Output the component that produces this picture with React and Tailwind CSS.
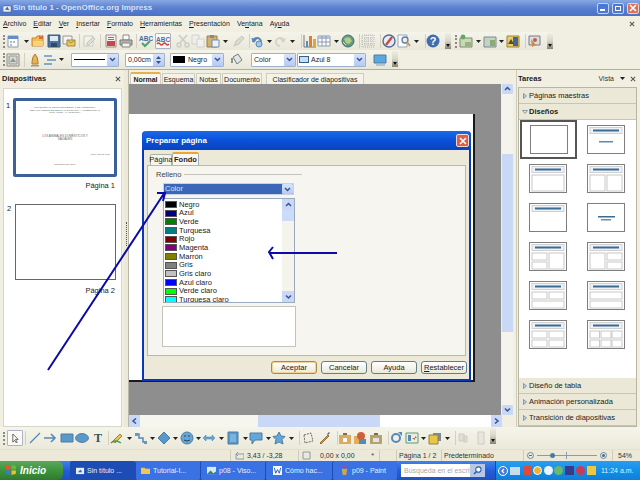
import React from "react";

const ICONS = {
  new: <><path d="M2 2h10v11H2z" fill="#fff" stroke="#7d8ea8"/><path d="M2 2h10v3H2z" fill="#4a7fc0"/><path d="M4 7h2v2H4zM7 7h2v2H7zM4 10h2v2H4z" fill="#9fb4cc"/></>,
  folder: <><path d="M1 4h4l1-2h6v10H1z" fill="#f3b33c" stroke="#b8791a"/><path d="M8 1l2 2 2-2v4H8z" fill="#d8542a"/><path d="M2 7h10v5H2z" fill="#f8cf6a"/></>,
  save: <><path d="M1 1h12v12H1z" fill="#2f5f95" stroke="#1f3f6a"/><path d="M3 2h8v5H3z" fill="#dfe8f2"/><path d="M4 9h6v4H4z" fill="#0f2f50"/></>,
  mail: <><path d="M1 2h9v8H1z" fill="#f4f4f4" stroke="#8a8a8a"/><path d="M5 6h8v6H5z" fill="#e9c44a" stroke="#9a7a20"/><path d="M5 6l4 3 4-3" fill="none" stroke="#9a7a20"/></>,
  edit: <><path d="M2 2h9v10H2z" fill="#f4f3ea" stroke="#c4c4bc"/><path d="M5 9l6-6 2 2-6 6H5z" fill="#ddd" stroke="#bbb"/></>,
  pdf: <><path d="M2 1h10v12H2z" fill="#f6f2f2" stroke="#8c7a7a"/><path d="M3 7h8v5H3z" fill="#c32b2b"/><path d="M4 3h6v1H4zM4 5h6v1H4z" fill="#b04a4a"/></>,
  print: <><path d="M4 1h6v5H4z" fill="#fff" stroke="#777"/><path d="M1 6h12v5H1z" fill="#aaa" stroke="#666"/><path d="M3 9h8v4H3z" fill="#f4f4f4" stroke="#777"/></>,
  spell: <><text x="0" y="6.5" fontSize="6.5" fontWeight="700" fill="#24589a" fontFamily="Liberation Sans">ABC</text><path d="M3 9l3 3 5-5" fill="none" stroke="#2a9a5a" strokeWidth="2"/></>,
  auto: <><text x="0" y="7.5" fontSize="6.5" fontWeight="700" fill="#24589a" fontFamily="Liberation Sans">ABC</text><path d="M1 10q1.5-2 3 0t3 0 3 0 3 0" fill="none" stroke="#d02020" strokeWidth="1.4"/></>,
  cut: <><path d="M3 1l7 8M11 1L4 9" stroke="#c8c8c2" strokeWidth="1.6"/><circle cx="3" cy="11" r="2" fill="none" stroke="#c8c8c2" strokeWidth="1.4"/><circle cx="11" cy="11" r="2" fill="none" stroke="#c8c8c2" strokeWidth="1.4"/></>,
  copy: <><path d="M1 1h7v9H1z" fill="#eee" stroke="#cfcfc8"/><path d="M6 5h7v8H6z" fill="#f2f2f2" stroke="#cfcfc8"/></>,
  paste: <><path d="M1 2h10v11H1z" fill="#c9a866" stroke="#8a6c30"/><path d="M4 1h4v3H4z" fill="#777"/><path d="M6 6h7v7H6z" fill="#eef3fa" stroke="#5a7ca8"/></>,
  brush: <><path d="M3 12l2-5 6-5 2 2-5 6z" fill="#d8d8d0" stroke="#c0c0b8"/><path d="M2 13l2-3 1 1z" fill="#c8c8c0"/></>,
  undo: <><path d="M3 8a4 4 0 1 1 4 4" fill="none" stroke="#3a76b4" strokeWidth="2"/><path d="M1 4l3 5 3-4z" fill="#3a76b4"/><circle cx="9" cy="10" r="3" fill="#9ac0e4" stroke="#3a76b4"/></>,
  redo: <><path d="M11 8a4 4 0 1 0-4 4" fill="none" stroke="#cfcfc8" strokeWidth="2"/><path d="M13 4l-3 5-3-4z" fill="#cfcfc8"/></>,
  chart: <><path d="M1 1v12h12" fill="none" stroke="#666"/><path d="M3 7h2v6H3z" fill="#3f7ac0"/><path d="M6 2h3v11H6z" fill="#d86a20"/><path d="M10 5h3v8h-3z" fill="#d8a020"/></>,
  table: <><path d="M1 2h12v10H1z" fill="#fff" stroke="#7d8ea8"/><path d="M1 2h12v3H1z" fill="#a8bcd8"/><path d="M5 2v10M9 2v10M1 8h12" stroke="#7d8ea8"/></>,
  globe: <><circle cx="7" cy="7" r="6" fill="#4d8a78" stroke="#2c5a50"/><path d="M3 5q3-3 6-1l2 3-3 3-3-1z" fill="#a6c870"/><path d="M2 8l3 3" stroke="#c8dce8"/></>,
  grid: <path d="M1 1h12v12H1zM1 4h12M1 7h12M1 10h12M4 1v12M7 1v12M10 1v12" fill="none" stroke="#aaa" strokeDasharray="1 1"/>,
  nav: <><circle cx="7" cy="7" r="6" fill="#e8ecf4" stroke="#34558a" strokeWidth="1.4"/><path d="M10 3L7 7l-3 4 3-4z" stroke="#c03030" strokeWidth="2.4"/></>,
  zoom: <><path d="M1 1h9v12H1z" fill="#fff" stroke="#8c9cb4"/><circle cx="8" cy="6" r="3" fill="#e6f0fa" stroke="#44688f" strokeWidth="1.3"/><path d="M10 8l3 4" stroke="#c09030" strokeWidth="2"/></>,
  help: <><circle cx="7" cy="7" r="6.5" fill="#2457a8"/><text x="7" y="11" textAnchor="middle" fontSize="11" fontWeight="700" fill="#fff" fontFamily="Liberation Sans">?</text></>,
  slideNew: <><path d="M1 4h12v9H1z" fill="#c4d6a8" stroke="#6a7a6a"/><circle cx="4" cy="3" r="2.4" fill="#44a048"/><path d="M6 8h6v4H6z" fill="#8aa870"/></>,
  slideDup: <><path d="M1 3h12v10H1z" fill="#b8d0c0" stroke="#6a7a8a"/><path d="M7 6h5v6H7z" fill="#7aa060"/></>,
  slideYel: <><path d="M1 2h12v11H1z" fill="#ecc850" stroke="#8a7020"/><path d="M7 3h5v9H7z" fill="#274f86"/><path d="M2 10l3-5 3 5z" fill="#333"/></>,
  show: <><path d="M2 2h11v9H2z" fill="#d8dce0" stroke="#667"/><path d="M4 5l5 6-4 2z" fill="#cc7a2a"/><circle cx="8" cy="6" r="2" fill="#b84a20"/></>,
  tbl: <><path d="M1 1h12v12H1z" fill="#e6e6de" stroke="#7a7a72"/><path d="M3 3h8v8H3z" fill="#cfd4da" stroke="#8a8a82"/><path d="M4 9l3-4 3 4z" fill="#7c8c7c"/></>,
  pin: <><path d="M7 1q3 3 3 8v2H4V9q0-5 3-8z" fill="#e8a83a" stroke="#a06a18"/><path d="M3 12h8v1.5H3z" fill="#a88a58"/></>,
  conn: <><path d="M1 3h8M4 7h9M1 11h8" stroke="#4a86b8" strokeWidth="1.6"/></>,
  fill: <><path d="M3 4l5-3 4 6-5 4z" fill="#dfe4e8" stroke="#5a6a70"/><path d="M2 5v5" stroke="#5a6a70" strokeWidth="1.6"/></>,
  screen: <><path d="M1 2h12v8H1z" fill="#3f9ce0" stroke="#3a6690"/><path d="M3 11h9v2H3z" fill="#a8bdd0"/></>,
  line: <path d="M2 12L12 2" stroke="#3a78b4" strokeWidth="1.3"/>,
  arrow: <path d="M1 7h11M8 3l4 4-4 4" fill="none" stroke="#3a78b4" strokeWidth="1.6"/>,
  rect: <path d="M1 3h12v8H1z" fill="#3f8ac6" stroke="#2f6a9a"/>,
  ellipse: <ellipse cx="7" cy="7" rx="6.4" ry="4.4" fill="#3f8ac6" stroke="#2f6a9a"/>,
  pen: <><path d="M3 10l7-7 2 2-7 7z" fill="#e8b840" stroke="#98701a"/><path d="M1 12q4-4 10 0" fill="none" stroke="#2a8a40" strokeWidth="1.3"/></>,
  curve: <><path d="M2 3h3v4h4v4h3" fill="none" stroke="#3a78b4" strokeWidth="1.5"/><path d="M1 2h3v3H1zM10 10h3v3h-3z" fill="#4a8ac0"/></>,
  diamond: <path d="M7 1l6 6-6 6-6-6z" fill="#3f8ac6" stroke="#2f6a9a"/>,
  smile: <><circle cx="7" cy="7" r="6" fill="#4f9ad6" stroke="#2f6a9a"/><path d="M4 5h2M8 5h2M4 9q3 2 6 0" stroke="#123" fill="none"/></>,
  dbl: <path d="M1 7l3-3v2h6V4l3 3-3 3V8H4v2z" fill="#4f9ad6" stroke="#2f6a9a" strokeWidth=".5"/>,
  flow: <><path d="M2 1h10v12H2z" fill="#3f8ac6" stroke="#2f6a9a"/><path d="M4 3h6v8H4z" fill="#6aa8da"/></>,
  callout: <path d="M1 2h12v7H6l-3 4V9H1z" fill="#4f9ad6" stroke="#2f6a9a"/>,
  star: <path d="M7 1l2 4 4 .5-3 3 1 4.500-4-2-4 2 1-4.500-3-3 4-.5z" fill="#4f9ad6" stroke="#2f6a9a"/>,
  points: <path d="M3 4l7-2 2 8-8 2z" fill="none" stroke="#555" strokeDasharray="2 1"/>,
  orange: <><path d="M3 12l8-8 1 1-8 8z" fill="#d88a30" stroke="#8a5a18"/><path d="M10 3l2-2 1 1-2 2z" fill="#555"/></>,
  ex: <><path d="M1 4h12v9H1z" fill="#d8a048"/><path d="M5 2h4v2H5z" fill="#735428"/><path d="M5 7h4v4H5z" fill="#fff"/></>,
  fav: <><path d="M1 5h8v8H1z" fill="#e8a040"/><circle cx="8" cy="5" r="4" fill="#c84a1a"/><path d="M6 8h7v5H6z" fill="#3a7ab0"/></>,
  brown: <><path d="M1 4h12v9H1z" fill="#ad9658"/><path d="M5 2h4v2H5z" fill="#735428"/><path d="M4 7h6v4H4z" fill="#d8e4ec"/></>,
  rotate: <><circle cx="7" cy="7" r="4" fill="none" stroke="#3a78b4" strokeWidth="2"/><path d="M9 1h4v4z" fill="#3a78b4"/></>,
  align: <><path d="M1 2h12v10H1z" fill="#e8f0e0" stroke="#4a8a5a"/><path d="M3 4h3v6H3z" fill="#3a78b4"/><path d="M7 7h5l-2-2v4z" fill="#c83a2a"/></>,
  layer: <><path d="M5 2h8v8H5z" fill="#6a7a8a"/><path d="M1 4h9v9H1z" fill="#e8c030" stroke="#8a7018"/></>,
  gray1: <path d="M3 3h5v7H3zM8 5h3v6H8z" fill="#dcdcd4" stroke="#c8c8c0"/>,
  gray2: <path d="M4 1h6v12H4z" fill="#e6e6de" stroke="#c8c8c0"/>,
};

function Ic({ n, m = "" }) {
  return <svg viewBox="0 0 14 14" className={`${m} block w-[14px] h-[14px] shrink-0 opacity-85`}>{ICONS[n]}</svg>;
}
const Arr = ({ m = "" }) => <svg viewBox="0 0 5 3" className={`${m} block w-[5px] h-[3px] shrink-0`}><path d="M0 0h5L2.5 3z" fill="#222" /></svg>;
const Sep = ({ m = "" }) => <div className={`${m} w-px h-[14px] bg-[#d4d0c0] shrink-0`} />;
const Dots = ({ m = "" }) => <div className={`${m} w-[2px] h-[13px] shrink-0 border-l-2 border-dotted border-[#8a8a80]`} />;
const Grip = ({ m = "" }) => (
  <div className={`${m} w-[6px] h-[16px] self-start mt-[1px] bg-gradient-to-b from-[#f0eee0] via-[#d8d6c8] to-[#888578] shrink-0 flex items-end justify-center pb-[2px]`}>
    <svg viewBox="0 0 4 3" className="block w-[4px] h-[3px]"><path d="M0 0h4L2 3z" fill="#111" /></svg>
  </div>
);
const Chev = ({ size = "w-[11px]" }) => (
  <div className={`${size} self-stretch bg-gradient-to-b from-[#d8e4fb] to-[#b5c9f3] flex items-center justify-center rounded-[1px] shrink-0`}>
    <svg viewBox="0 0 7 5" className="block w-[7px] h-[5px]"><path d="M1 1l2.5 2.5L6 1" fill="none" stroke="#38558c" strokeWidth="1.5" /></svg>
  </div>
);
const Pt = ({ up, down, left, right }) => {
  const d = up ? "M1 4l2.5-2.5L6 4" : down ? "M1 1.500l2.500 2.500L6 1.500" : left ? "M5 .500L2 3l3 2.500" : "M2 .500L5 3l-3 2.500";
  return <svg viewBox="0 0 7 6" className="block w-[7px] h-[6px]"><path d={d} fill="none" stroke="#38558c" strokeWidth="1.500" /></svg>;
};

function Thumb({ kind }) {
  const box = (x, y, w, h, k) => <rect key={k} x={x} y={y} width={w} height={h} fill="#fff" stroke="#c8c8c8" strokeWidth="1" />;
  const title = (
    <g>
      <rect x="3" y="2.500" width="32" height="6" fill="#eef2f6" stroke="#d0d0d0" />
      <rect x="6" y="4.500" width="26" height="2" fill="#3b6d94" />
    </g>
  );
  const L = 3, T = 11;
  const grids = {
    1: [[L, T, 32, 16]],
    2: [[L, T, 15, 16], [20, T, 15, 16]],
    4: [[L, T, 15, 7], [L, 20, 15, 7], [20, T, 15, 16]],
    5: [[L, T, 15, 16], [20, T, 15, 7], [20, 20, 15, 7]],
    6: [[L, T, 15, 7], [20, T, 15, 7], [L, 20, 32, 7]],
    7: [[L, T, 32, 7], [L, 20, 32, 7]],
    8: [[L, T, 15, 7], [20, T, 15, 7], [L, 20, 15, 7], [20, 20, 15, 7]],
    9: [[L, T, 9.500, 7], [14, T, 10, 7], [25, T, 10, 7], [L, 20, 9.500, 7], [14, 20, 10, 7], [25, 20, 10, 7]],
  };
  return (
    <svg viewBox="0 0 38 29" className="block w-[38px] h-[29px]">
      <rect x=".5" y=".5" width="37" height="28" fill="#fff" stroke="#7e7e7e" />
      {kind !== "blank" && kind !== "center" && title}
      {kind === "one" && <rect x="12" y="16" width="14" height="1.500" fill="#5e8aa8" />}
      {kind === "center" && <><rect x="11" y="13" width="17" height="1.500" fill="#3b6d94" /><rect x="14" y="16" width="10" height="1.500" fill="#6e8ea8" /></>}
      {grids[kind] && grids[kind].map((b, i) => box(b[0], b[1], b[2], b[3], i))}
    </svg>
  );
}

const COLORS = [
  ["Negro", "bg-[#000000]"], ["Azul", "bg-[#000080]"], ["Verde", "bg-[#008000]"], ["Turquesa", "bg-[#008080]"],
  ["Rojo", "bg-[#800000]"], ["Magenta", "bg-[#800080]"], ["Marrón", "bg-[#808000]"], ["Gris", "bg-[#808080]"],
  ["Gris claro", "bg-[#c0c0c0]"], ["Azul claro", "bg-[#0000ff]"], ["Verde claro", "bg-[#00ff00]"], ["Turquesa claro", "bg-[#00ffff]"],
];

const Btn = ({ children, def }) => (
  <div className={`w-[46px] h-[13px] rounded-[3px] border flex items-center justify-center bg-gradient-to-b from-white to-[#ece9d8] ${def ? "border-[#b08a3c] shadow-[inset_0_0_0_1px_#f0d49a]" : "border-[#5f7f8f]"}`}>{children}</div>
);

const Section = ({ label, open, bold }) => (
  <div className="h-[16px] bg-[#ebe8d8] border-b border-[#c8c5b2] flex items-center pl-[3px] shrink-0">
    {open ? (
      <svg viewBox="0 0 6 6" className="block w-[6px] h-[6px]"><path d="M.5 1.500h5L3 4.500z" fill="#dfe4ec" stroke="#6a7a8a" strokeWidth=".7" /></svg>
    ) : (
      <svg viewBox="0 0 6 6" className="block w-[6px] h-[6px]"><path d="M1.500.5v5L4.500 3z" fill="#c0d0e8" stroke="#6a7a8a" strokeWidth=".7" /></svg>
    )}
    <span className={bold ? "ml-px font-bold" : "ml-px"}>{label}</span>
  </div>
);

export default function App() {
  return (
    <div className="relative w-[640px] h-[480px] overflow-hidden flex flex-col bg-[#f1efe2] text-[7px] leading-none text-[#222] font-['Liberation_Sans',Arial,sans-serif]">
      {/* title */}
      <div className="h-[16px] shrink-0 flex items-center bg-gradient-to-b from-[#86a8e4] via-[#5a80d0] to-[#4a72c6] text-[#d8e2f6] font-bold">
        <svg viewBox="0 0 10 10" className="block ml-[3px] w-[9px] h-[9px]"><path d="M0 2h9v7H0z" fill="#e8eef8" stroke="#345" strokeWidth=".6" /><path d="M2 6l3-3 2 4z" fill="#3a6ab0" /></svg>
        <span className="ml-[1px] text-[8px]">Sin título 1 - OpenOffice.org Impress</span>
        <div className="ml-auto mr-[1px] flex gap-[3px]">
          <div className="w-[12px] h-[11px] rounded-[2px] bg-[#4a78d4] border border-[#c4d4f0] flex items-end pl-[2px] pb-[2px]"><div className="w-[5px] h-[2px] bg-white" /></div>
          <div className="w-[12px] h-[11px] rounded-[2px] bg-[#4a78d4] border border-[#c4d4f0] flex items-center justify-center"><div className="w-[6px] h-[5px] border border-white" /></div>
          <div className="w-[12px] h-[11px] rounded-[2px] bg-[#d8705e] border border-[#e8d4d0] flex items-center justify-center"><svg viewBox="0 0 8 8" className="block w-[8px] h-[8px]"><path d="M1 1l6 6M7 1L1 7" stroke="#fff" strokeWidth="1.600" /></svg></div>
        </div>
      </div>

      {/* menu */}
      <div className="h-[16px] shrink-0 flex items-center pl-[3px] pb-[1px] gap-[7px] bg-[#f1efe2] text-[#1c1c1c]">
        <span><u>A</u>rchivo</span><span><u>E</u>ditar</span><span><u>V</u>er</span><span><u>I</u>nsertar</span><span><u>F</u>ormato</span><span><u>H</u>erramientas</span><span><u>P</u>resentación</span><span>Ve<u>n</u>tana</span><span>Ay<u>u</u>da</span>
        <svg viewBox="0 0 7 7" className="block ml-auto mr-[5px] w-[6px] h-[6px]"><path d="M1 1l5 5M6 1L1 6" stroke="#555" strokeWidth="1.200" /></svg>
      </div>

      {/* toolbar 1 */}
      <div className="h-[18px] shrink-0 flex items-center bg-[#f1efe2]">
        <div className="flex items-center w-[553px] h-full bg-gradient-to-b from-[#f5f4ea] to-[#e9e7d8]">
          <Dots m="ml-[3px]" />
          <Ic n="new" m="ml-[1px]" /><Arr m="ml-[4px]" /><Ic n="folder" m="ml-[2px]" /><Ic n="save" m="ml-[2px]" /><Ic n="mail" m="ml-[1px]" /><Sep m="ml-[3px]" />
          <Ic n="edit" m="ml-[2px]" /><Sep m="ml-[4px]" /><Ic n="pdf" m="ml-[3px]" /><Ic n="print" m="ml-[1px]" /><Sep m="ml-[3px]" />
          <Ic n="spell" m="ml-[2px]" />
          <div className="ml-[2px] w-[16px] h-[16px] border border-[#aab4c4] bg-white/60 rounded-[1px] flex items-center justify-center shrink-0"><Ic n="auto" /></div>
          <Ic n="cut" m="ml-[5px]" /><Ic n="copy" m="ml-[1px]" /><Ic n="paste" m="ml-[1px]" /><Arr m="ml-[3px]" /><Ic n="brush" m="ml-[3px]" /><Sep m="ml-[4px]" />
          <Ic n="undo" /><Arr m="ml-[3px]" /><Ic n="redo" m="ml-[1px]" /><Arr m="ml-[3px]" /><Sep m="ml-[6px]" />
          <Ic n="chart" m="ml-[1px]" /><Ic n="table" /><Arr m="ml-[3px]" /><Ic n="globe" m="ml-[2px]" /><Sep m="ml-[4px]" />
          <Ic n="grid" m="ml-[1px]" /><Sep m="ml-[5px]" /><Ic n="nav" m="ml-[1px]" /><Ic n="zoom" m="ml-[1px]" /><Arr m="ml-[3px]" /><Sep m="ml-[6px]" />
          <Ic n="help" /><Grip m="ml-[5px]" />
          <Dots m="ml-[4px]" />
          <Ic n="slideNew" m="ml-[2px]" /><Arr m="ml-[3px]" /><Ic n="slideDup" m="ml-[2px]" /><Arr m="ml-[2px]" /><Ic n="slideYel" m="ml-[2px]" /><Sep m="ml-[5px]" />
          <Ic n="show" m="ml-[1px]" /><Grip m="ml-[6px]" />
        </div>
      </div>

      {/* toolbar 2 */}
      <div className="h-[20px] shrink-0 flex items-center border-b border-[#b0ad9c]">
        <div className="flex items-center w-[400px] h-full bg-gradient-to-b from-[#f5f4ea] to-[#e9e7d8]">
          <Dots m="ml-[3px]" />
          <Ic n="tbl" m="ml-[1px]" /><Sep m="ml-[4px]" /><Ic n="pin" m="ml-[3px]" /><Ic n="conn" m="ml-[1px]" /><Arr m="ml-[2px]" />
          <div className="ml-[7px] w-[48px] h-[14px] border border-[#9fb2cc] bg-white flex items-center pl-[2px] shrink-0 rounded-[1px]">
            <div className="flex-1 h-px bg-black" /><div className="w-[2px]" /><Chev />
          </div>
          <div className="ml-[6px] w-[40px] h-[14px] border border-[#9fb2cc] bg-white flex items-center pl-[2px] shrink-0 rounded-[1px]">
            <span>0,00cm</span>
            <div className="ml-auto w-[11px] self-stretch bg-gradient-to-b from-[#d8e4fb] to-[#b5c9f3] flex flex-col items-center justify-center gap-[2px]">
              <svg viewBox="0 0 5 3" className="block w-[5px] h-[3px]"><path d="M0 3h5L2.500 0z" fill="#38558c" /></svg>
              <svg viewBox="0 0 5 3" className="block w-[5px] h-[3px]"><path d="M0 0h5L2.500 3z" fill="#38558c" /></svg>
            </div>
          </div>
          <div className="ml-[5px] w-[54px] h-[14px] border border-[#9fb2cc] bg-white flex items-center pl-[2px] shrink-0 rounded-[1px]">
            <div className="w-[12px] h-[7px] bg-black" /><span className="ml-[3px]">Negro</span><div className="ml-auto self-stretch flex"><Chev /></div>
          </div>
          <Ic n="fill" m="ml-[6px]" />
          <div className="ml-[7px] w-[45px] h-[14px] border border-[#9fb2cc] bg-white flex items-center pl-[2px] shrink-0 rounded-[1px]">
            <span>Color</span><div className="ml-auto self-stretch flex"><Chev /></div>
          </div>
          <div className="ml-[1px] w-[69px] h-[14px] border border-[#9fb2cc] bg-white flex items-center pl-[1px] shrink-0 rounded-[1px]">
            <div className="w-[10px] h-[7px] bg-[#c8dcf4] border border-[#36608c]" /><span className="ml-[2px]">Azul 8</span><div className="ml-auto self-stretch flex"><Chev /></div>
          </div>
          <Ic n="screen" m="ml-[7px]" /><Grip m="ml-[5px]" />
        </div>
      </div>

      {/* main */}
      <div className="h-[357px] shrink-0 flex">
        {/* left */}
        <div className="w-[124px] shrink-0 flex flex-col pl-[3px] pr-[2px]">
          <div className="h-[18px] shrink-0 flex items-center justify-between font-bold text-[7.500px] -ml-[1px]">
            <span>Diapositivas</span>
            <svg viewBox="0 0 7 7" className="block mr-[1px] w-[6px] h-[6px]"><path d="M1 1l5 5M6 1L1 6" stroke="#555" strokeWidth="1.200" /></svg>
          </div>
          <div className="flex-1 bg-white border border-[#d8d6c8] relative text-[7.500px] pt-[9px]">
            <div className="flex pl-[2px]">
              <span className="w-[7px] mt-[4px]">1</span>
              <div className="w-[104px] h-[79px] border-[3px] border-[#3a6198] rounded-[2px] flex flex-col items-center bg-white pt-[6px] text-[2.500px] text-[#666]">
                <span>UNIVERSIDAD CENTROCCIDENTAL DE VENEZUELA</span>
                <span>DEPARTAMENTO DE EDUCACIÓN BÁSICA Y PREESCOLAR</span>
                <span>INICIACIÓN A LA BIOLOGÍA</span>
                <span className="mt-[20px] text-[3px]">LOS ANIMALES DOMÉSTICOS Y</span>
                <span className="text-[3px]">SALVAJES</span>
                <span className="self-end mr-[4px] mt-[13px]">Autor: Carlos Pino</span>
                <span className="mt-[8px]">Caracas junio 2009</span>
              </div>
            </div>
            <div className="text-right pr-[6px] mt-[5px] h-[8px]">Página 1</div>
            <div className="flex pl-[3px] mt-[14px]">
              <span className="w-[8px] mt-[1px]">2</span>
              <div className="w-[101px] h-[76px] border border-[#666] bg-white" />
            </div>
            <div className="text-right pr-[6px] mt-[7px]">Página 2</div>
          </div>
        </div>

        {/* splitter */}
        <div className="w-[5px] shrink-0 flex items-center justify-center bg-[#ece9d8] border-r border-[#b8b6a8]">
          <div className="w-px h-[24px] mb-[30px] border-l border-dotted border-[#555]" />
        </div>

        {/* center */}
        <div className="w-[387px] shrink-0 flex flex-col">
          <div className="h-[14px] shrink-0 flex items-end pl-[1px] gap-[1px]">
            <div className="h-[12px] w-[31px] bg-[#f8f6ec] border-t-2 border-x border-t-[#e8b048] border-x-[#cfcdbc] rounded-t-[2px] flex items-center justify-center font-bold">Normal</div>
            <div className="h-[11px] w-[33px] bg-[#f4f3ea] border border-b-0 border-[#cfcdbc] flex items-center justify-center">Esquema</div>
            <div className="h-[11px] w-[25px] bg-[#f4f3ea] border border-b-0 border-[#cfcdbc] flex items-center justify-center">Notas</div>
            <div className="h-[11px] w-[40px] bg-[#f4f3ea] border border-b-0 border-[#cfcdbc] flex items-center justify-center">Documento</div>
            <div className="ml-[3px] h-[11px] w-[98px] bg-[#f4f3ea] border border-b-0 border-[#cfcdbc] flex items-center justify-center">Clasificador de diapositivas</div>
          </div>
          <div className="flex-1 flex min-h-0">
            <div className="w-[372px] shrink-0 bg-[#8e8e8e] pt-[30px] overflow-hidden">
              <div className="w-[346px] h-[268px] bg-white border-r-2 border-b-2 border-[#1a1a1a]" />
            </div>
            <div className="w-[11px] shrink-0 ml-[1px] bg-[#f4f3ec] flex flex-col">
              <div className="h-[10px] bg-[#c8d8f6] flex items-center justify-center rounded-[1px]"><Pt up /></div>
              <div className="h-[60px]" />
              <div className="h-[178px] bg-[#c8d8f6]" />
              <div className="flex-1" />
              <div className="h-[10px] bg-[#c8d8f6] flex items-center justify-center rounded-[1px]"><Pt down /></div>
            </div>
          </div>
          <div className="h-[12px] shrink-0 flex items-center bg-[#f6f5ee] mr-[14px]">
            <div className="w-[11px] h-full bg-[#c8d8f6] flex items-center justify-center"><Pt left /></div>
            <div className="w-[118px]" />
            <div className="w-[122px] h-full bg-[#c8d8f6]" />
            <div className="flex-1 h-full bg-white" />
            <div className="w-[11px] h-full bg-[#c8d8f6] flex items-center justify-center"><Pt right /></div>
          </div>
        </div>

        {/* right */}
        <div className="w-[124px] shrink-0 flex flex-col pl-[1px] pr-[3px] border-l border-[#cfccba]">
          <div className="h-[17px] shrink-0 flex items-center font-bold text-[7.500px]">
            <span>Tareas</span>
            <span className="ml-auto font-normal text-[7px] text-[#333]">Vista</span>
            <Arr m="ml-[6px]" />
            <svg viewBox="0 0 7 7" className="block ml-[5px] mr-[1px] w-[6px] h-[6px]"><path d="M1 1l5 5M6 1L1 6" stroke="#555" strokeWidth="1.200" /></svg>
          </div>
          <div className="h-[340px] shrink-0 border border-[#b8b5a2] flex flex-col bg-white text-[7.500px]">
            <Section label="Páginas maestras" />
            <Section label="Diseños" open bold />
            <div className="flex-1 grid grid-cols-[58px_58px] auto-rows-[39px] content-start">
              <div className="flex items-center justify-center border-2 border-[#555] w-[57px] ml-px"><Thumb kind="blank" /></div>
              {["one", 1, 2, "title", "center", 4, 5, 6, 7, 8, 9].map((k, i) => (
                <div key={i} className="flex items-center justify-center"><Thumb kind={k} /></div>
              ))}
            </div>
            <Section label="Diseño de tabla" />
            <Section label="Animación personalizada" />
            <Section label="Transición de diapositivas" />
          </div>
        </div>
      </div>

      {/* draw toolbar */}
      <div className="h-[22px] shrink-0 flex items-center bg-gradient-to-b from-[#f5f4ea] to-[#ebe9da]">
        <Dots m="ml-[3px]" />
        <div className="ml-[2px] w-[16px] h-[16px] border border-[#aab4c4] bg-white/70 rounded-[1px] flex items-center justify-center shrink-0">
          <svg viewBox="0 0 10 12" className="block w-[9px] h-[11px]"><path d="M2 1v9l2-2 2 3 1-1-2-3h3z" fill="#fff" stroke="#333" strokeWidth=".8" /></svg>
        </div>
        <Sep m="ml-[2px]" />
        <Ic n="line" m="ml-[2px]" /><Ic n="arrow" m="ml-[1px]" /><Ic n="rect" m="ml-[3px]" /><Ic n="ellipse" m="ml-[1px]" />
        <span className="ml-[2px] w-[14px] text-[12px] font-bold text-[#355] text-center font-['Liberation_Serif',serif] shrink-0">T</span>
        <Sep m="ml-[3px]" />
        <Ic n="pen" m="ml-[1px]" /><Arr m="ml-[3px]" /><Ic n="curve" m="ml-[2px]" /><Arr m="ml-[2px]" /><Ic n="diamond" m="ml-[2px]" /><Arr m="ml-[2px]" /><Ic n="smile" m="ml-[2px]" /><Arr m="ml-[2px]" /><Ic n="dbl" m="ml-[1px]" /><Arr m="ml-[3px]" /><Ic n="flow" m="ml-[2px]" /><Arr m="ml-[3px]" /><Ic n="callout" m="ml-[1px]" /><Arr m="ml-[3px]" /><Ic n="star" m="ml-[1px]" /><Arr m="ml-[3px]" /><Sep m="ml-[5px]" />
        <Ic n="points" m="ml-[1px]" /><Ic n="orange" m="ml-[2px]" /><Sep m="ml-[6px]" />
        <Ic n="ex" /><Ic n="fav" m="ml-[1px]" /><Ic n="brown" m="ml-[2px]" /><Sep m="ml-[5px]" />
        <Ic n="rotate" /><Ic n="align" m="ml-[2px]" /><Arr m="ml-[2px]" /><Ic n="layer" m="ml-[2px]" /><Arr m="ml-[3px]" /><Sep m="ml-[5px]" />
        <Ic n="gray1" /><Ic n="gray2" m="ml-[4px]" /><Grip m="ml-[2px]" />
      </div>

      {/* status */}
      <div className="h-[12px] shrink-0 flex items-center bg-[#ece9d8] text-[7px] text-[#333] border-t border-[#e4e1d0]">
        <div className="w-[230px] shrink-0" />
        <div className="w-[68px] h-full flex items-center border-l border-[#cfccba] pl-[4px]">
          <svg viewBox="0 0 9 9" className="block w-[9px] h-[9px] mr-[3px]"><path d="M1 3h8v5H1zM3 1L1 3l2 2" fill="none" stroke="#8a9aaa" /></svg>3,43 / -3,28
        </div>
        <div className="w-[68px] h-full flex items-center border-l border-[#cfccba] pl-[3px]">
          <svg viewBox="0 0 9 9" className="block w-[9px] h-[9px] mr-[9px]"><path d="M1 1h7v7H1z" fill="none" stroke="#8a9aaa" /></svg>0,00 x 0,00
        </div>
        <div className="w-[13px] h-full flex items-center justify-center">*</div>
        <div className="w-[17px] h-full border-l border-[#cfccba]" />
        <div className="w-[45px] h-full flex items-center border-l border-[#cfccba] pl-[2px]">Página 1 / 2</div>
        <div className="w-[82px] h-full flex items-center border-l border-[#cfccba] pl-[2px]">Predeterminado</div>
        <div className="w-[89px] h-full flex items-center border-l border-[#cfccba] pl-[3px]">
          <div className="w-[7px] h-[7px] rounded-full border border-[#6a8aa8] flex items-center justify-center"><div className="w-[3px] h-px bg-[#4a6a88]" /></div>
          <div className="relative mx-[3px] w-[60px] h-px bg-[#8a9aaa]">
            <div className="absolute left-[13px] -top-[2px] w-[5px] h-[5px] rounded-full bg-[#4a7aa8]" />
            <div className="absolute left-[29px] -top-[3px] w-px h-[7px] bg-[#8a9aaa]" />
          </div>
          <div className="w-[7px] h-[7px] rounded-full border border-[#6a8aa8] flex items-center justify-center"><div className="w-[3px] h-[3px] bg-[#4a6a88] rounded-full" /></div>
        </div>
        <div className="flex-1 h-full flex items-center border-l border-[#cfccba] pl-[5px]">54%</div>
      </div>

      {/* taskbar */}
      <div className="flex-1 flex items-center bg-gradient-to-b from-[#3f82ec] via-[#245edb] to-[#1f50c0] text-[#e8effa] text-[7px]">
        <div className="w-[63px] h-full bg-gradient-to-b from-[#5aa85a] via-[#3d943d] to-[#2f7a2f] rounded-r-[6px] flex items-center pl-[6px] gap-[3px] shrink-0">
          <svg viewBox="0 0 10 10" className="block w-[11px] h-[11px]"><path d="M0 1l4-1v4H0z" fill="#e8552a" /><path d="M5 0l4 1v3H5z" fill="#6ab83a" /><path d="M0 5h4v4L0 8z" fill="#3a7ad8" /><path d="M5 5h4v3l-4 1z" fill="#eec02a" /></svg>
          <span className="italic font-bold text-white text-[10px]">Inicio</span>
        </div>
        <div className="ml-[7px] w-[65px] h-full bg-[#1c4cb4] rounded-[2px] flex items-center pl-[6px] gap-[2px] shrink-0">
          <svg viewBox="0 0 10 10" className="block w-[9px] h-[9px]"><path d="M0 2h9v7H0z" fill="#e8eef8" /><path d="M2 7l3-3 2 3z" fill="#3a6ab0" /></svg>Sin título ...
        </div>
        <div className="w-[65px] h-full bg-[#3a72e4] rounded-[2px] flex items-center pl-[5px] gap-[3px] shrink-0 border-l border-[#1c4cb4]">
          <svg viewBox="0 0 10 10" className="block w-[9px] h-[9px]"><path d="M0 2h4l1 1h5v6H0z" fill="#f0c850" /></svg>Tutorial-I...
        </div>
        <div className="w-[65px] h-full bg-[#3a72e4] rounded-[2px] flex items-center pl-[6px] gap-[3px] shrink-0 border-l border-[#1c4cb4]">
          <svg viewBox="0 0 10 10" className="block w-[9px] h-[9px]"><path d="M0 1h10v8H0z" fill="#d8e8f8" /><path d="M0 9l4-4 3 3 3-2v3z" fill="#3a8a4a" /></svg>p08 - Viso...
        </div>
        <div className="w-[67px] h-full bg-[#3a72e4] rounded-[2px] flex items-center pl-[7px] gap-[3px] shrink-0 border-l border-[#1c4cb4]">
          <svg viewBox="0 0 10 10" className="block w-[9px] h-[9px]"><path d="M0 0h10v10H0z" fill="#f4f8ff" /><path d="M1.500 2l1.500 6 2-4 2 4 1.500-6" fill="none" stroke="#2a5ab0" /></svg>Cómo hac...
        </div>
        <div className="w-[65px] h-full bg-[#3a72e4] rounded-[2px] flex items-center pl-[7px] gap-[3px] shrink-0 border-l border-[#1c4cb4]">
          <svg viewBox="0 0 10 10" className="block w-[9px] h-[9px]"><path d="M2 3h6l-1 7H3z" fill="#c8a850" /><path d="M3 0l1 3M5 0v3M7 0L6 3" stroke="#a84a8a" /></svg>p09 - Paint
        </div>
        <div className="ml-[4px] w-[69px] h-[13px] bg-white flex items-center pl-[3px] text-[#a8a8a8] whitespace-nowrap shrink-0">Búsqueda en el escrit</div>
        <div className="w-[15px] h-[13px] bg-[#b8c8e4] flex items-center justify-center shrink-0">
          <svg viewBox="0 0 10 10" className="block w-[9px] h-[9px]"><circle cx="6" cy="4" r="3" fill="#fff" stroke="#2a5ab0" strokeWidth="1.200" /><path d="M4 6L1 9" stroke="#2a5ab0" strokeWidth="1.600" /></svg>
        </div>
        <div className="ml-[10px] flex-1 h-full bg-gradient-to-b from-[#2a9cf0] via-[#1290e8] to-[#0f7ed8] border-l border-[#0a50a8] flex items-center pl-[2px] gap-[1px]">
          <div className="w-[10px] h-[10px] rounded-full bg-[#4a7ad8] border border-white flex items-center justify-center"><svg viewBox="0 0 6 6" className="block w-[6px] h-[6px]"><path d="M4 1L2 3l2 2" fill="none" stroke="#fff" strokeWidth="1.200" /></svg></div>
          <div className="w-[10px] h-[8px] bg-[#c8dcf0] ml-[1px]" />
          <div className="w-[9px] h-[9px] ml-[2px] rounded-[2px] bg-[#e04a3a]" />
          <div className="w-[9px] h-[9px] rounded-full bg-[#f0b030] border border-white" />
          <div className="w-[9px] h-[9px] rounded-full bg-[#e8f4ff] ml-[1px]" />
          <div className="w-[9px] h-[9px] rounded-full bg-[#6ab86a]" />
          <div className="w-[9px] h-[9px] bg-[#3a3a8a] ml-[1px]" />
          <div className="w-[9px] h-[9px] rounded-full bg-[#c83a5a] ml-[1px]" />
          <div className="w-[9px] h-[9px] bg-[#f0c840] ml-[1px]" />
          <span className="ml-[4px] text-[#dff0ff] whitespace-nowrap">11:24 a.m.</span>
        </div>
      </div>

      {/* dialog */}
      <div className="absolute left-[142px] top-[131px] w-[329px] h-[250px] bg-[#ece9d8] border-2 border-t-0 border-[#0a38b8] rounded-t-[4px] flex flex-col">
        <div className="h-[19px] -mx-[2px] shrink-0 bg-gradient-to-b from-[#1a6ae8] via-[#0a50d8] to-[#0a44c0] rounded-t-[5px] flex items-center pl-[4px] text-white font-bold text-[8px]">
          <span>Preparar página</span>
          <div className="ml-auto mr-[2px] w-[13px] h-[13px] rounded-[2px] bg-[#d8604a] border border-[#f4d8d0] flex items-center justify-center">
            <svg viewBox="0 0 8 8" className="block w-[8px] h-[8px]"><path d="M1 1l6 6M7 1L1 7" stroke="#fff" strokeWidth="1.600" /></svg>
          </div>
        </div>
        <div className="h-[15px] shrink-0 flex items-end pl-[6px] text-[7.500px]">
          <div className="h-[11px] w-[22px] bg-[#f5f4ee] border border-b-0 border-[#a8b0a8] flex items-center justify-center rounded-t-[2px]">Página</div>
          <div className="h-[13px] w-[27px] bg-[#f8f7f2] border-t-2 border-x border-t-[#e8a838] border-x-[#a8b0a8] flex items-center justify-center font-bold rounded-t-[2px]">Fondo</div>
        </div>
        <div className="mx-[3px] h-[191px] shrink-0 bg-[#f6f5ef] border border-[#b8b8ac] text-[7.500px] pl-[15px] flex flex-col">
          <div className="flex items-center -ml-[7px] h-[17px] shrink-0">
            <span className="text-[#444]">Relleno</span>
            <div className="ml-[3px] w-[118px] h-px bg-[#c4c4bc]" />
          </div>
          <div className="w-[131px] h-[12px] shrink-0 bg-[#3a67b8] border border-[#c8d4e4] flex items-center pl-[1px] text-[#d8e4f8]">
            <span>Color</span><div className="ml-auto self-stretch flex"><Chev /></div>
          </div>
          <div className="mt-[3px] w-[132px] h-[105px] shrink-0 bg-white border border-[#9aaabc] flex overflow-hidden">
            <div className="flex-1 pl-[1px] pt-[1px] min-w-0">
              {COLORS.map(([name, c]) => (
                <div key={name} className="h-[8.700px] flex items-center">
                  <div className={`${c} w-[12px] h-[7px] border border-[#555] shrink-0`} />
                  <span className="ml-[2px]">{name}</span>
                </div>
              ))}
            </div>
            <div className="w-[12px] shrink-0 bg-[#f4f3ec] flex flex-col">
              <div className="h-[11px] bg-[#c8d8f6] flex items-center justify-center"><Pt up /></div>
              <div className="h-[11px] bg-[#ccdcf8]" />
              <div className="flex-1" />
              <div className="h-[11px] bg-[#c8d8f6] flex items-center justify-center"><Pt down /></div>
            </div>
          </div>
          <div className="mt-[3px] -ml-[1px] w-[134px] h-[41px] shrink-0 bg-white border border-[#c4c4bc]" />
        </div>
        <div className="flex-1 flex items-center justify-end gap-[4px] pr-[2px] text-[7.500px]">
          <Btn def>Aceptar</Btn><Btn>Cancelar</Btn><Btn>Ayuda</Btn><Btn><span><u>R</u>establecer</span></Btn>
        </div>
      </div>

      {/* annotation arrows */}
      <svg viewBox="0 0 640 480" className="absolute inset-0 w-[640px] h-[480px] pointer-events-none">
        <path d="M48 370L165 192M157 193h8l-2 8" fill="none" stroke="#0b0ba8" strokeWidth="2" />
        <path d="M337 253H269M273 247l-4 5 4 7" fill="none" stroke="#0b0ba8" strokeWidth="2" />
      </svg>
    </div>
  );
}
